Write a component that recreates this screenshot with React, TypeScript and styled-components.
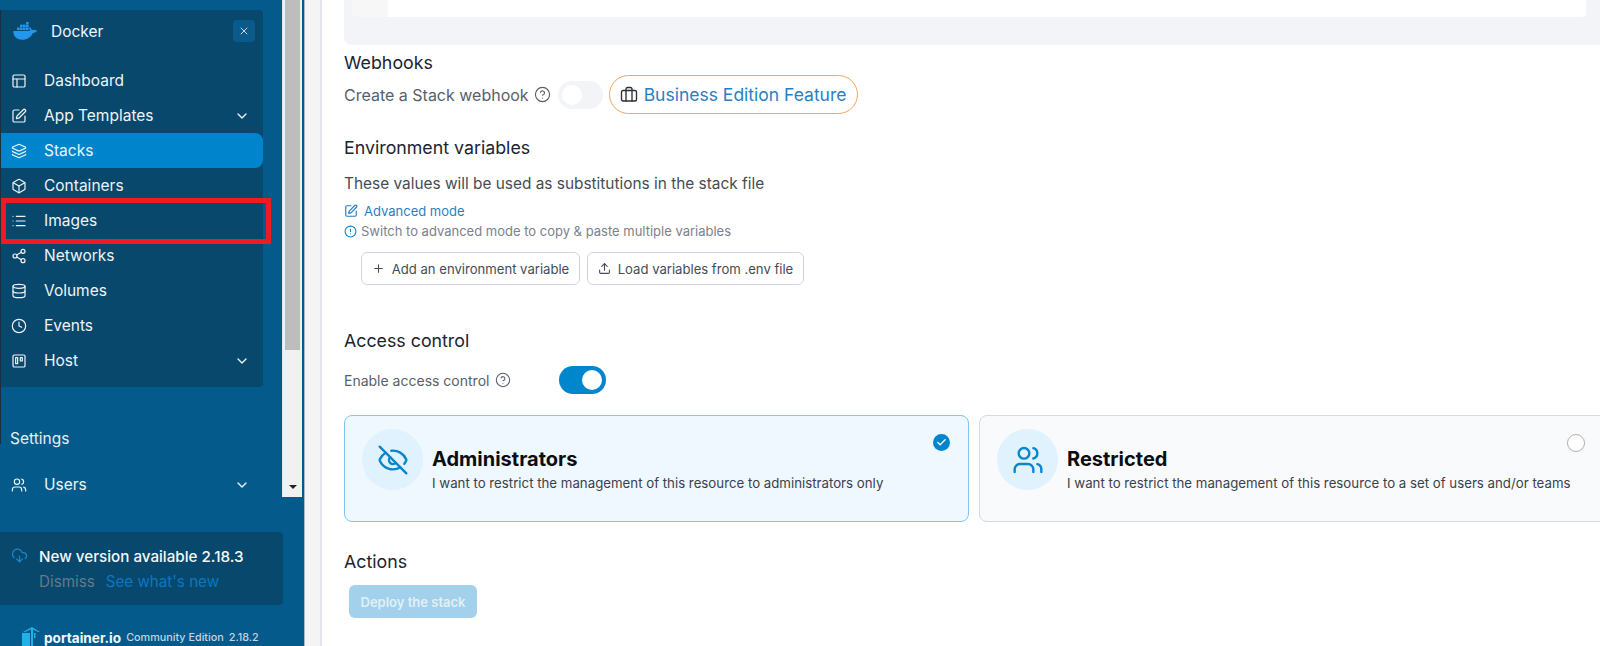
import React from "react";
import styled, { createGlobalStyle } from "styled-components";
import {
  Box,
  Briefcase,
  Check,
  ChevronDown,
  CircleAlert,
  CircleHelp,
  Clock,
  CloudDownload,
  Database,
  EyeOff,
  Layers,
  List,
  PanelsTopLeft,
  Plus,
  Share2,
  SquarePen,
  Upload,
  Users,
  X,
} from "lucide-react";

const GlobalStyle = createGlobalStyle`
  html, body {
    margin: 0;
    padding: 0;
    background: #f4f4f4;
    font-family: "Inter", "Liberation Sans", sans-serif;
  }
  * {
    box-sizing: border-box;
  }
`;

const Page = styled.div`
  display: flex;
  width: 1600px;
  height: 646px;
  overflow: hidden;
  background: #f4f4f4;
`;

const Sidebar = styled.aside`
  display: flex;
  flex-direction: column;
  flex: none;
  width: 305px;
  height: 646px;
  background: #045a8a;
  border-right: 1px solid #a9b9c6;
`;

const SidebarTop = styled.div`
  display: flex;
  flex: none;
  height: 497px;
`;

const NavColumn = styled.div`
  position: relative;
  flex: none;
  width: 282px;
  padding-top: 10px;

  &::before {
    content: "";
    position: absolute;
    left: 0;
    top: 10px;
    width: 1px;
    height: 434px;
    background: #1d2f3c;
  }
`;

const EnvPanel = styled.div`
  width: 263px;
  height: 377px;
  background: #08486c;
  border-radius: 0 4px 4px 0;
`;

const EnvHeader = styled.div`
  display: flex;
  align-items: center;
  height: 42px;
  padding: 0 8px 0 13px;
`;

const DockerName = styled.span`
  margin-left: 13px;
  flex: 1;
  color: #f1f6fa;
  font-size: 15.5px;
`;

const CloseButton = styled.div`
  display: flex;
  align-items: center;
  justify-content: center;
  width: 22px;
  height: 22px;
  border-radius: 4px;
  background: #0a5a8c;
  color: #c5d8e6;
`;

const NavList = styled.div`
  display: flex;
  flex-direction: column;
  padding-top: 11px;
`;

const NavItem = styled.div<{ $active?: boolean }>`
  display: flex;
  align-items: center;
  height: 35px;
  padding: 0 13px 0 11px;
  color: #eef4f8;
  font-size: 15.5px;
  border-radius: ${(p) => (p.$active ? "0 8px 8px 0" : "0")};
  background: ${(p) => (p.$active ? "#0085cc" : "transparent")};
`;

const NavLabel = styled.span`
  flex: 1;
  margin-left: 17px;
`;

const Section = styled.div`
  margin: 42px 0 0 10px;
  color: #e6eff5;
  font-size: 15.5px;
  line-height: 20px;
`;

const UsersRow = styled(NavItem)`
  margin: 18px 19px 0 0;
`;

const RedMark = styled.div`
  position: absolute;
  left: 1px;
  top: 198px;
  width: 270px;
  height: 46px;
  border: 5px solid #ed1c24;
`;

const ScrollTrack = styled.div`
  display: flex;
  flex-direction: column;
  align-items: center;
  flex: none;
  width: 20px;
  background: #f1f1f1;
  border-left: 1px solid #e3e7ea;
`;

const ScrollThumb = styled.div`
  width: 15px;
  height: 350px;
  background: #bdbdbd;
`;

const ScrollArrow = styled.div`
  margin-top: 135px;
  width: 0;
  height: 0;
  border-left: 4px solid transparent;
  border-right: 4px solid transparent;
  border-top: 4px solid #222;
`;

const UpdateBox = styled.div`
  display: grid;
  grid-template-columns: 28px auto;
  flex: none;
  width: 283px;
  height: 73px;
  margin-top: 35px;
  padding: 15px 0 0 11px;
  background: #08486c;
  border-radius: 0 4px 4px 0;
  color: #1a86c8;
`;

const UpdateText = styled.div`
  display: flex;
  flex-direction: column;
  gap: 6px;
`;

const UpdateTitle = styled.div`
  color: #f5f8fb;
  font-size: 15.2px;
  font-weight: 500;
  line-height: 20px;
  white-space: nowrap;
`;

const UpdateLinks = styled.div`
  display: flex;
  gap: 11px;
  font-size: 15.2px;
  line-height: 18px;
`;

const Dismiss = styled.span`
  color: #64798a;
`;

const WhatsNew = styled.span`
  color: #0a77c2;
`;

const Footer = styled.div`
  display: flex;
  align-items: center;
  flex: none;
  height: 17px;
  margin-top: 24px;
  padding-left: 22px;
  white-space: nowrap;
`;

const LogoWrap = styled.div`
  display: flex;
  margin-top: -2px;
`;

const Brand = styled.span`
  margin-left: 4px;
  color: #f4f8fb;
  font-size: 13.6px;
  font-weight: 700;
`;

const Edition = styled.span<{ $gap: number }>`
  margin-left: ${(p) => p.$gap}px;
  color: #c6d3dd;
  font-size: 10.8px;
  font-weight: 500;
`;

const Gutter = styled.div`
  flex: none;
  width: 15px;
`;

const Main = styled.main`
  flex: 1;
  min-width: 0;
  height: 646px;
  background: #fff;
  border-left: 2px solid #e3e4ec;
  padding-left: 22px;
  overflow: hidden;
`;

const EditorTail = styled.div`
  display: flex;
  height: 45px;
  padding-left: 8px;
  background: #f3f4f8;
  border-radius: 0 0 0 8px;
`;

const EditorGutter = styled.div`
  width: 36px;
  height: 17px;
  background: #f7f7f7;
  border-radius: 0 0 0 6px;
`;

const EditorBody = styled.div`
  flex: 1;
  height: 17px;
  margin-right: 14px;
  background: #fff;
  border-radius: 0 0 4px 0;
`;

const Heading = styled.h2<{ $top: number }>`
  margin: ${(p) => p.$top}px 0 0;
  color: #1c2430;
  font-size: 17.8px;
  font-weight: 400;
  line-height: 20px;
`;

const HookRow = styled.div`
  display: flex;
  align-items: center;
  height: 39px;
  margin-top: 2px;
`;

const RowLabel = styled.span`
  color: #575f6b;
  font-size: 16px;
`;

const HelpIcon = styled(CircleHelp)`
  flex: none;
  margin-left: 5px;
  color: #575f6b;
`;

const Toggle = styled.div<{ $on?: boolean }>`
  display: flex;
  align-items: center;
  justify-content: ${(p) => (p.$on ? "flex-end" : "flex-start")};
  flex: none;
  width: 45px;
  height: 28px;
  padding: 0 4px;
  border-radius: 14px;
  background: ${(p) => (p.$on ? "#0086cc" : "#f2f4f7")};
`;

const Knob = styled.div`
  width: 20px;
  height: 20px;
  border-radius: 50%;
  background: #fff;
`;

const HookToggle = styled(Toggle)`
  margin-left: 7px;
`;

const BusinessPill = styled.div`
  display: flex;
  align-items: center;
  gap: 6px;
  height: 39px;
  margin-left: 6px;
  padding: 0 11px 0 10px;
  border: 1px solid #f7a55e;
  border-radius: 20px;
  color: #2b2f36;
`;

const BusinessText = styled.span`
  color: #2a7fc4;
  font-size: 17.5px;
  white-space: nowrap;
`;

const Hint = styled.p`
  margin: 16px 0 0;
  color: #454c57;
  font-size: 15.4px;
  line-height: 20px;
`;

const AdvancedLink = styled.div`
  display: flex;
  align-items: center;
  gap: 6px;
  margin-top: 8px;
  height: 18px;
  color: #2a7fc4;
  font-size: 13px;
`;

const SwitchHint = styled.div`
  display: flex;
  align-items: center;
  gap: 4px;
  height: 18px;
  margin-top: 2px;
  color: #7a828e;
  font-size: 13px;
`;

const SwitchIcon = styled(CircleAlert)`
  flex: none;
  color: #0a86cc;
`;

const ButtonRow = styled.div`
  display: flex;
  gap: 7px;
  margin: 12px 0 0 17px;
`;

const OutlineButton = styled.div<{ $width: number }>`
  display: flex;
  align-items: center;
  justify-content: center;
  gap: 7px;
  width: ${(p) => p.$width}px;
  height: 33px;
  border: 1px solid #d0d5dd;
  border-radius: 6px;
  background: #fff;
  color: #454c57;
  font-size: 13.1px;
`;

const AccessRow = styled.div`
  display: flex;
  align-items: center;
  height: 28px;
  margin-top: 15px;
`;

const AccessLabel = styled.span`
  width: 151px;
  display: flex;
  align-items: center;
  color: #575f6b;
  font-size: 14px;
  white-space: nowrap;
`;

const AccessToggle = styled(Toggle)`
  margin-left: 48px;
  width: 47px;
`;

const CardRow = styled.div`
  display: flex;
  gap: 10px;
  margin-top: 21px;
  width: 1280px;
`;

const Card = styled.div<{ $selected?: boolean }>`
  position: relative;
  display: flex;
  align-items: flex-start;
  flex: none;
  width: ${(p) => (p.$selected ? 625 : 645)}px;
  height: 107px;
  padding: 13px 0 0 17px;
  border: 1px solid ${(p) => (p.$selected ? "#7cc8f2" : "#d5d9e2")};
  border-radius: 8px;
  background: ${(p) => (p.$selected ? "#eff8ff" : "#f9fafb")};
`;

const IconDisc = styled.div`
  display: flex;
  align-items: center;
  justify-content: center;
  flex: none;
  width: 61px;
  height: 61px;
  border-radius: 50%;
  background: #e0f2fe;
  color: #0a86cc;
`;

const CardText = styled.div`
  margin: 18px 0 0 9px;
`;

const CardTitle = styled.div`
  color: #0b0d10;
  font-size: 20px;
  font-weight: 700;
  line-height: 24px;
`;

const CardDesc = styled.div`
  margin-top: 3px;
  color: #3a414b;
  font-size: 13.25px;
  line-height: 18px;
  white-space: nowrap;
`;

const CheckMark = styled.div`
  position: absolute;
  top: 18px;
  right: 18px;
  display: flex;
  align-items: center;
  justify-content: center;
  width: 17px;
  height: 17px;
  border-radius: 50%;
  background: #0086cc;
  color: #fff;
`;

const RadioMark = styled.div`
  position: absolute;
  top: 18px;
  left: 587px;
  width: 18px;
  height: 18px;
  border-radius: 50%;
  border: 1px solid #a9afbc;
  background: #fff;
`;

const DeployButton = styled.div`
  display: flex;
  align-items: center;
  justify-content: center;
  width: 128px;
  height: 33px;
  margin: 13px 0 0 5px;
  border-radius: 6px;
  background: #a3d0ea;
  color: #e0f0f9;
  font-size: 13px;
  font-weight: 600;
`;

const DockerLogo = () => (
  <svg width="25" height="18" viewBox="0 0 25 18" fill="#2396ed">
    <rect x="4" y="5.5" width="2.6" height="2.6" />
    <rect x="7" y="5.5" width="2.6" height="2.6" />
    <rect x="10" y="5.5" width="2.6" height="2.6" />
    <rect x="13" y="5.5" width="2.6" height="2.6" />
    <rect x="7" y="2.6" width="2.6" height="2.6" />
    <rect x="10" y="2.6" width="2.6" height="2.6" />
    <rect x="13" y="2.6" width="2.6" height="2.6" />
    <rect x="13" y="0" width="2.6" height="2.4" />
    <path d="M0.3 9h16.2c.4-1.2.2-2.6-.5-3.6l.6-.5c1.4.9 2.1 2.2 2.2 3.3 1.5-.5 3.6-.5 5.2.5-.7 1.5-2.2 2.2-4 2.2C18.2 14.600 14.500 17.800 9 17.800 3.200 17.800.300 13.800.300 9z" />
  </svg>
);

const PortainerLogo = () => (
  <svg width="18" height="20" viewBox="0 0 18 20" fill="#1fb1e8">
    <rect x="0" y="6" width="8" height="14" />
    <rect x="9" y="1" width="2" height="19" />
    <path d="M1 5 10 0l8 5h-2L10 2 3 5z" />
    <rect x="12" y="6" width="1.500" height="5" />
  </svg>
);

// kanban board icon used for the Host entry
const HostIcon = ({ size = 16, strokeWidth = 2 }: { size?: number; strokeWidth?: number }) => (
  <svg
    width={size}
    height={size}
    viewBox="0 0 24 24"
    fill="none"
    stroke="currentColor"
    strokeWidth={strokeWidth}
    strokeLinecap="round"
    strokeLinejoin="round"
  >
    <rect x="3" y="3" width="18" height="18" rx="2" />
    <rect x="7" y="7" width="3" height="9" />
    <rect x="14" y="7" width="3" height="5" />
  </svg>
);

const navItems = [
  { label: "Dashboard", icon: PanelsTopLeft },
  { label: "App Templates", icon: SquarePen, more: true },
  { label: "Stacks", icon: Layers, active: true },
  { label: "Containers", icon: Box },
  { label: "Images", icon: List },
  { label: "Networks", icon: Share2 },
  { label: "Volumes", icon: Database },
  { label: "Events", icon: Clock },
  { label: "Host", icon: HostIcon, more: true },
];

export default function App() {
  return (
    <Page>
      <GlobalStyle />
      <Sidebar>
        <SidebarTop>
          <NavColumn>
            <EnvPanel>
              <EnvHeader>
                <DockerLogo />
                <DockerName>Docker</DockerName>
                <CloseButton>
                  <X size={12} />
                </CloseButton>
              </EnvHeader>
              <NavList>
                {navItems.map((item) => (
                  <NavItem key={item.label} $active={item.active}>
                    <item.icon size={16} strokeWidth={1.8} />
                    <NavLabel>{item.label}</NavLabel>
                    {item.more && <ChevronDown size={16} />}
                  </NavItem>
                ))}
              </NavList>
            </EnvPanel>
            <Section>Settings</Section>
            <UsersRow>
              <Users size={16} strokeWidth={1.8} />
              <NavLabel>Users</NavLabel>
              <ChevronDown size={16} />
            </UsersRow>
            <RedMark />
          </NavColumn>
          <ScrollTrack>
            <ScrollThumb />
            <ScrollArrow />
          </ScrollTrack>
        </SidebarTop>
        <UpdateBox>
          <CloudDownload size={17} strokeWidth={1.8} />
          <UpdateText>
            <UpdateTitle>New version available 2.18.3</UpdateTitle>
            <UpdateLinks>
              <Dismiss>Dismiss</Dismiss>
              <WhatsNew>See what's new</WhatsNew>
            </UpdateLinks>
          </UpdateText>
        </UpdateBox>
        <Footer>
          <LogoWrap>
            <PortainerLogo />
          </LogoWrap>
          <Brand>portainer.io</Brand>
          <Edition $gap={5}>Community Edition</Edition>
          <Edition $gap={5}>2.18.2</Edition>
        </Footer>
      </Sidebar>
      <Gutter />
      <Main>
        <EditorTail>
          <EditorGutter />
          <EditorBody />
        </EditorTail>
        <Heading $top={8}>Webhooks</Heading>
        <HookRow>
          <RowLabel>Create a Stack webhook</RowLabel>
          <HelpIcon size={17} strokeWidth={1.6} />
          <HookToggle>
            <Knob />
          </HookToggle>
          <BusinessPill>
            <Briefcase size={18} strokeWidth={1.8} />
            <BusinessText>Business Edition Feature</BusinessText>
          </BusinessPill>
        </HookRow>
        <Heading $top={24}>Environment variables</Heading>
        <Hint>These values will be used as substitutions in the stack file</Hint>
        <AdvancedLink>
          <SquarePen size={14} />
          Advanced mode
        </AdvancedLink>
        <SwitchHint>
          <SwitchIcon size={13} />
          Switch to advanced mode to copy &amp; paste multiple variables
        </SwitchHint>
        <ButtonRow>
          <OutlineButton $width={219}>
            <Plus size={13} />
            Add an environment variable
          </OutlineButton>
          <OutlineButton $width={217}>
            <Upload size={13} />
            Load variables from .env file
          </OutlineButton>
        </ButtonRow>
        <Heading $top={46}>Access control</Heading>
        <AccessRow>
          <AccessLabel>Enable access control</AccessLabel>
          <CircleHelp size={16} strokeWidth={1.6} color="#575f6b" />
          <AccessToggle $on>
            <Knob />
          </AccessToggle>
        </AccessRow>
        <CardRow>
          <Card $selected>
            <IconDisc>
              <EyeOff size={32} strokeWidth={1.8} />
            </IconDisc>
            <CardText>
              <CardTitle>Administrators</CardTitle>
              <CardDesc>I want to restrict the management of this resource to administrators only</CardDesc>
            </CardText>
            <CheckMark>
              <Check size={11} strokeWidth={3} />
            </CheckMark>
          </Card>
          <Card>
            <IconDisc>
              <Users size={32} strokeWidth={1.8} />
            </IconDisc>
            <CardText>
              <CardTitle>Restricted</CardTitle>
              <CardDesc>I want to restrict the management of this resource to a set of users and/or teams</CardDesc>
            </CardText>
            <RadioMark />
          </Card>
        </CardRow>
        <Heading $top={30}>Actions</Heading>
        <DeployButton>Deploy the stack</DeployButton>
      </Main>
    </Page>
  );
}
